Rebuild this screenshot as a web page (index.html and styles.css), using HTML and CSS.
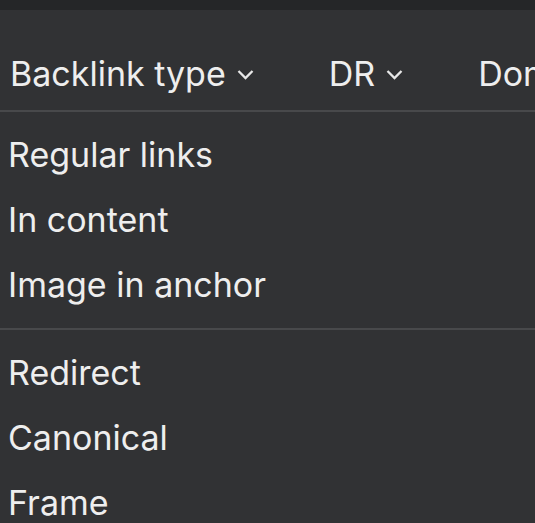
FILE: index.html
```html
<!DOCTYPE html>
<html>
<head>
<meta charset="utf-8">
<link rel="stylesheet" href="styles.css">
</head>
<body>
<div class="topbar"></div>
<div class="panel">
  <div class="header">
    <div class="col">Backlink type <svg class="chev" width="17" height="11" viewBox="0 0 17 11"><polyline points="1.5,2 8.5,9 15.5,2" fill="none" stroke="#e8e8e8" stroke-width="2.3"/></svg></div>
    <div class="col">DR <svg class="chev" width="17" height="11" viewBox="0 0 17 11"><polyline points="1.5,2 8.5,9 15.5,2" fill="none" stroke="#e8e8e8" stroke-width="2.3"/></svg></div>
    <div class="col">Domain</div>
  </div>
  <div class="group">
    <div class="item">Regular links</div>
    <div class="item">In content</div>
    <div class="item">Image in anchor</div>
  </div>
  <div class="group">
    <div class="item">Redirect</div>
    <div class="item">Canonical</div>
    <div class="item">Frame</div>
  </div>
</div>
</body>
</html>
```
FILE: styles.css
```css
html, body { margin: 0; padding: 0; background: #313234; overflow: hidden; }
body { font-family: Inter, "Noto Sans", sans-serif; color: #eeeeee; font-size: 34px; }
.topbar { height: 10px; background: #252628; }
.panel { background: #313234; }
.header { display: flex; gap: 75px; padding: 31px 0 4px 10px; line-height: 65px; white-space: nowrap; border-bottom: 2px solid #48494b; overflow: hidden; }
.col { display: flex; align-items: center; gap: 11px; flex-shrink: 0; }
.chev { margin-top: 2px; flex-shrink: 0; }
.group { padding: 10px 0 11px 8px; border-bottom: 2px solid #48494b; }
.item { line-height: 65px; white-space: nowrap; }
```
